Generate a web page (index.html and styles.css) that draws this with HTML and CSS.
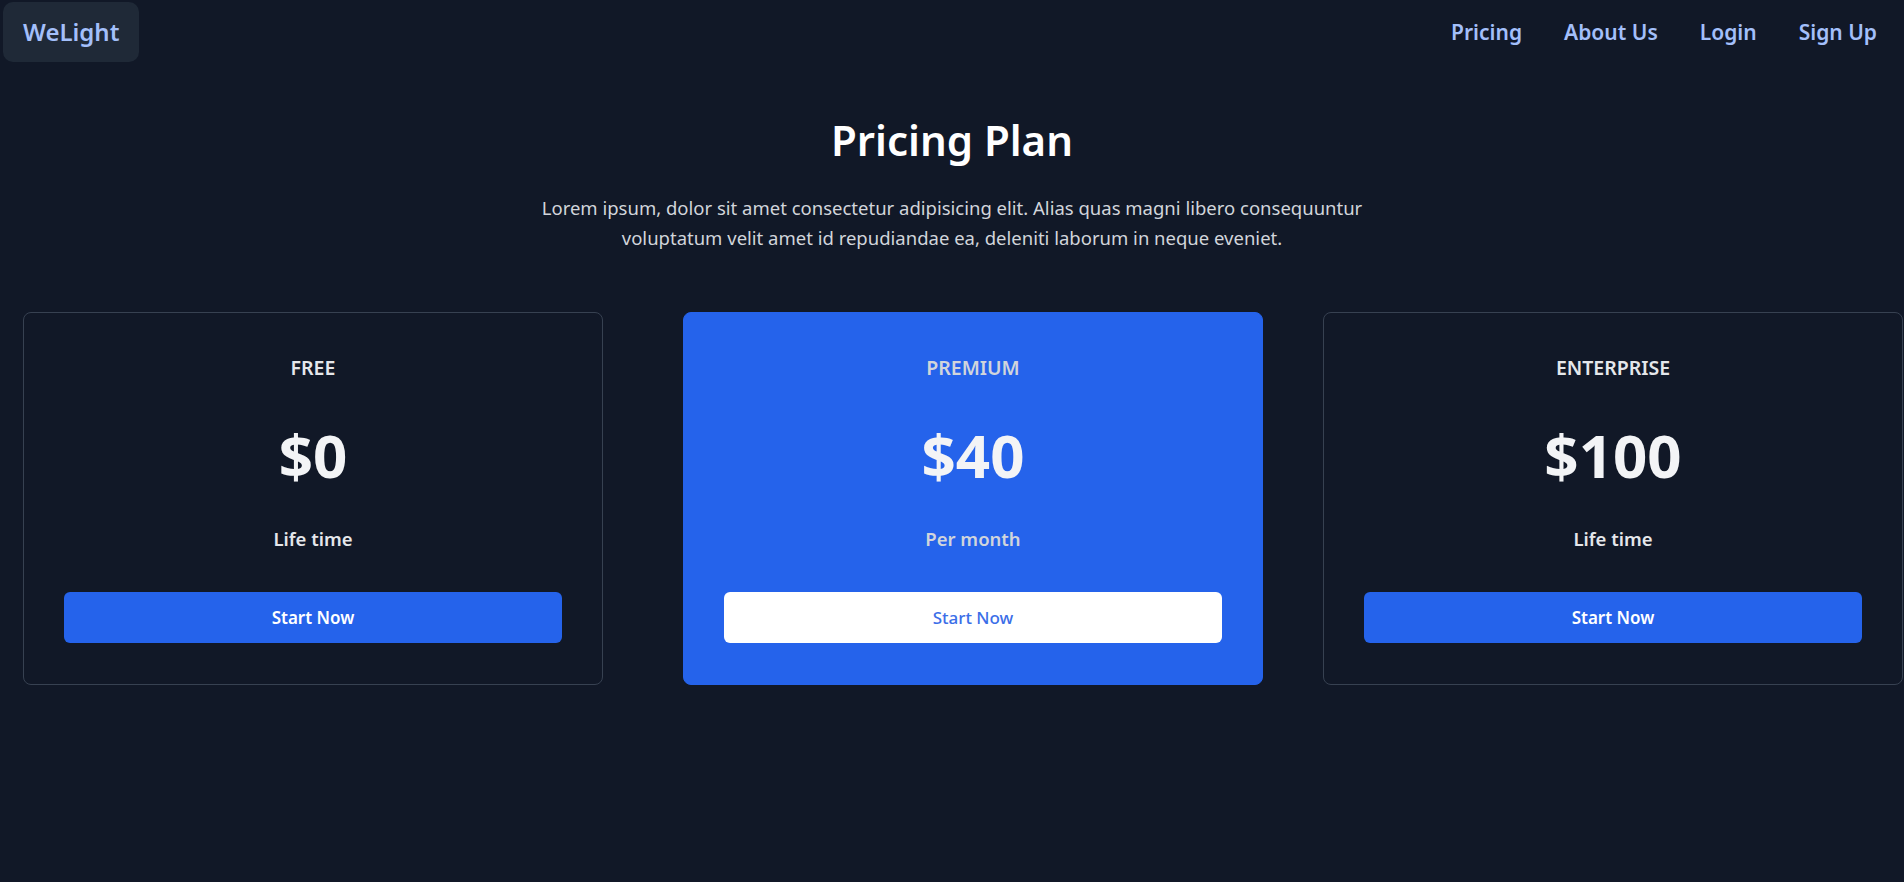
FILE: index.html
```html
<!DOCTYPE html>
<html lang="en">
<head>
<meta charset="utf-8">
<title>WeLight - Pricing</title>
<link rel="stylesheet" href="styles.css">
</head>
<body>
<header class="topbar">
  <a class="logo" href="#">WeLight</a>
  <nav class="nav">
    <a class="nav-link" href="#">Pricing</a>
    <a class="nav-link" href="#">About Us</a>
    <a class="nav-link" href="#">Login</a>
    <a class="nav-link" href="#">Sign Up</a>
  </nav>
</header>
<main class="pricing">
  <h1 class="pricing-title">Pricing Plan</h1>
  <p class="pricing-lead">Lorem ipsum, dolor sit amet consectetur adipisicing elit. Alias quas magni libero consequuntur voluptatum velit amet id repudiandae ea, deleniti laborum in neque eveniet.</p>
  <div class="cards">
    <div class="card">
      <div class="card-label">FREE</div>
      <div class="card-price">$0</div>
      <div class="card-period">Life time</div>
      <button class="card-btn">Start Now</button>
    </div>
    <div class="card card-featured">
      <div class="card-label">PREMIUM</div>
      <div class="card-price">$40</div>
      <div class="card-period">Per month</div>
      <button class="card-btn">Start Now</button>
    </div>
    <div class="card">
      <div class="card-label">ENTERPRISE</div>
      <div class="card-price">$100</div>
      <div class="card-period">Life time</div>
      <button class="card-btn">Start Now</button>
    </div>
  </div>
</main>
</body>
</html>
```
FILE: styles.css
```css
* { box-sizing: border-box; }
html, body { margin: 0; padding: 0; }
body {
  background: #111827;
  font-family: "Noto Sans", "Open Sans", sans-serif;
  color: #f3f4f6;
  min-height: 882px;
}
a { text-decoration: none; }

.topbar {
  display: flex;
  justify-content: space-between;
  align-items: center;
  padding: 2px 0 0 3px;
}
.logo {
  display: block;
  height: 60px;
  line-height: 60px;
  padding: 0 20px;
  border-radius: 10px;
  background: #1f2937;
  color: #a3bffa;
  font-size: 24px;
  font-weight: 600;
}
.nav {
  display: flex;
  align-items: center;
  padding-right: 6px;
}
.nav-link {
  color: #a3bffa;
  font-size: 21px;
  font-weight: 600;
  padding: 0 21px;
  line-height: 60px;
}

.pricing { text-align: center; }
.pricing-title {
  margin: 50px 0 0;
  font-size: 42px;
  font-weight: 600;
  line-height: 56px;
  color: #ffffff;
}
.pricing-lead {
  max-width: 860px;
  margin: 25px auto 0;
  font-size: 18.5px;
  line-height: 30px;
  color: #d1d5db;
}

.cards {
  display: flex;
  gap: 60px;
  padding: 0 1px 0 23px;
  margin-top: 59px;
}
.card {
  width: 580px;
  height: 373px;
  border: 1px solid #374151;
  border-radius: 8px;
  padding: 40px 40px 40px;
  display: flex;
  flex-direction: column;
  align-items: center;
}
.card-featured {
  margin-left: 20px;
  background: #2563eb;
  border-color: #2563eb;
}
.card-label {
  margin-top: 1px;
  font-size: 19.5px;
  font-weight: 600;
  line-height: 28px;
  color: #e5e7eb;
}
.card-featured .card-label { color: #d1d5db; }
.card-price {
  margin-top: 43px;
  font-size: 60px;
  font-weight: 700;
  line-height: 60px;
  color: #f3f4f6;
}
.card-period {
  margin-top: 40px;
  font-size: 18.5px;
  font-weight: 600;
  line-height: 28px;
  color: #e5e7eb;
}
.card-featured .card-period { color: #d1d5db; }
.card-btn {
  margin-top: 39px;
  width: 100%;
  height: 51px;
  border: 0;
  border-radius: 6px;
  background: #2563eb;
  color: #ffffff;
  font-family: inherit;
  font-size: 17px;
  font-weight: 600;
  cursor: pointer;
}
.card-featured .card-btn {
  background: #ffffff;
  color: #3b6ee8;
  font-weight: 500;
}
```
